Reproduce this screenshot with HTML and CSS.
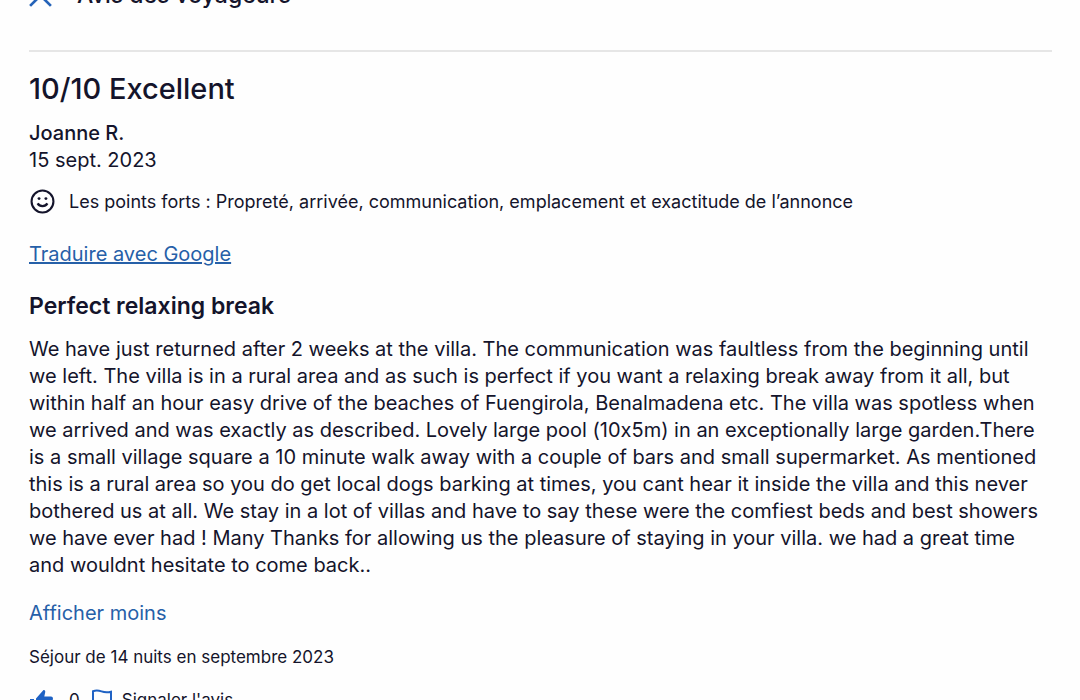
FILE: index.html
```html
<!DOCTYPE html>
<html lang="fr">
  <head>
    <meta charset="UTF-8">
    <meta name="viewport" content="width=device-width, initial-scale=1">
    <title>Avis des voyageurs</title>
    <link rel="stylesheet" href="styles.css">
  </head>

  <body>
    <header class="sheet-header">
      <button class="close-button" type="button" aria-label="Fermer">
        <svg class="close-icon" viewBox="0 0 24 24" aria-hidden="true">
          <path d="M2 2l20 20M22 2L2 22" fill="none" stroke="currentColor" stroke-width="2.6"/>
        </svg>
      </button>
      <h1 class="sheet-title">Avis des voyageurs</h1>
    </header>

    <article class="review">
      <h2 class="review-score">10/10 Excellent</h2>
      <div class="review-author">Joanne R.</div>
      <div class="review-date">15 sept. 2023</div>

      <div class="review-highlights">
        <svg class="smile-icon" viewBox="0 0 24 24" aria-hidden="true">
          <circle cx="12" cy="12" r="10.5" fill="none" stroke="currentColor" stroke-width="2"/>
          <circle cx="8.7" cy="9.2" r="1.4" fill="currentColor"/>
          <circle cx="15.3" cy="9.2" r="1.4" fill="currentColor"/>
          <path d="M7.3 13.8c1 1.7 2.7 2.6 4.7 2.6s3.7-.9 4.7-2.6" fill="none" stroke="currentColor" stroke-width="2.2"/>
        </svg>
        <span>Les points forts : Propreté, arrivée, communication, emplacement et exactitude de l’annonce</span>
      </div>

      <a class="translate-link" href="#">Traduire avec Google</a>

      <h3 class="review-title">Perfect relaxing break</h3>
      <p class="review-text">We have just returned after 2 weeks at the villa. The communication was faultless from the beginning until we left. The villa is in a rural area and as such is perfect if you want a relaxing break away from it all, but within half an hour easy drive of the beaches of Fuengirola, Benalmadena etc. The villa was spotless when we arrived and was exactly as described. Lovely large pool (10x5m) in an exceptionally large garden.There is a small village square a 10 minute walk away with a couple of bars and small supermarket. As mentioned this is a rural area so you do get local dogs barking at times, you cant hear it inside the villa and this never bothered us at all. We stay in a lot of villas and have to say these were the comfiest beds and best showers we have ever had ! Many Thanks for allowing us the pleasure of staying in your villa. we had a great time and wouldnt hesitate to come back..</p>
      <button class="toggle-button" type="button">Afficher moins</button>

      <div class="review-stay">Séjour de 14 nuits en septembre 2023</div>

      <div class="review-actions">
        <button class="action-button helpful-button" type="button" aria-label="Avis utile, 0">
          <svg class="action-icon" viewBox="0 0 24 24" aria-hidden="true">
            <path d="M1 10h4v13H1zM7 9.5L14.500 1c1.400 0 2 1 1.700 2.300L15.300 7.500H22c1.400 0 2.200 1.200 1.900 2.600l-2.200 10.500c-.3 1.400-1.300 2.400-2.700 2.400H7z" fill="currentColor"/>
          </svg>
          <span>0</span>
        </button>
        <button class="action-button" type="button">
          <svg class="action-icon" viewBox="0 0 24 24" aria-hidden="true">
            <path d="M3 24V2.200c3-1 5.500-.8 8.500.2 3.200 1.100 6 1.200 9.500.3v12.500c-3.500.9-6.300.8-9.500-.3-3-1-5.500-1.200-8.500-.2" fill="none" stroke="currentColor" stroke-width="2"/>
          </svg>
          <span>Signaler l'avis</span>
        </button>
      </div>
    </article>
  </body>
</html>
```
FILE: styles.css
```css
html, body {
  height: 100%;
}

body {
  margin: 0;
  overflow: hidden;
  background-color: #fefefe;
  color: #14142b;
  font-family: Inter, "Open Sans", sans-serif;
  font-size: 20px;
  font-variant-ligatures: no-contextual;
  line-height: 27px;
}

h1, h2, h3, p {
  margin: 0;
}

button {
  padding: 0;
  border: 0;
  background: none;
  color: inherit;
  font: inherit;
  cursor: pointer;
}

/* the sheet is scrolled, only the bottom of the header shows */
.sheet-header {
  display: flex;
  align-items: center;
  gap: 24px;
  height: 28px;
  margin-top: -19px;
  padding: 0 28px;
}

.close-button {
  display: flex;
  color: #2563b8;
}

.close-icon {
  width: 25px;
  height: 25px;
}

.sheet-title {
  font-size: 23px;
  font-weight: 500;
  line-height: 28px;
}

.review {
  margin: 41px 28px 0 29px;
  padding-top: 19px;
  border-top: 2px solid #e6e6e6;
}

.review-score {
  margin-bottom: 13px;
  font-size: 29px;
  font-weight: 500;
  line-height: 36px;
}

.review-author {
  font-weight: 500;
}

.review-highlights {
  display: flex;
  align-items: center;
  gap: 13px;
  margin-top: 14px;
  font-size: 18px;
}

.smile-icon {
  width: 25px;
  height: 25px;
  padding: 1px;
}

.translate-link {
  display: inline-block;
  margin-top: 26px;
  color: #2660a8;
}

.review-title {
  margin: 24px 0 16px;
  font-size: 23px;
  font-weight: 600;
  line-height: 28px;
}

.toggle-button {
  margin-top: 21px;
  color: #2660a8;
}

.review-stay {
  margin-top: 17px;
  font-size: 17px;
}

.review-actions {
  display: flex;
  gap: 10px;
  margin-top: 16px;
  font-size: 17px;
}

.action-button {
  display: flex;
  align-items: center;
  gap: 8px;
}

.helpful-button {
  gap: 16px;
}

.action-icon {
  width: 24px;
  height: 24px;
  color: #1f62c4;
}
```
